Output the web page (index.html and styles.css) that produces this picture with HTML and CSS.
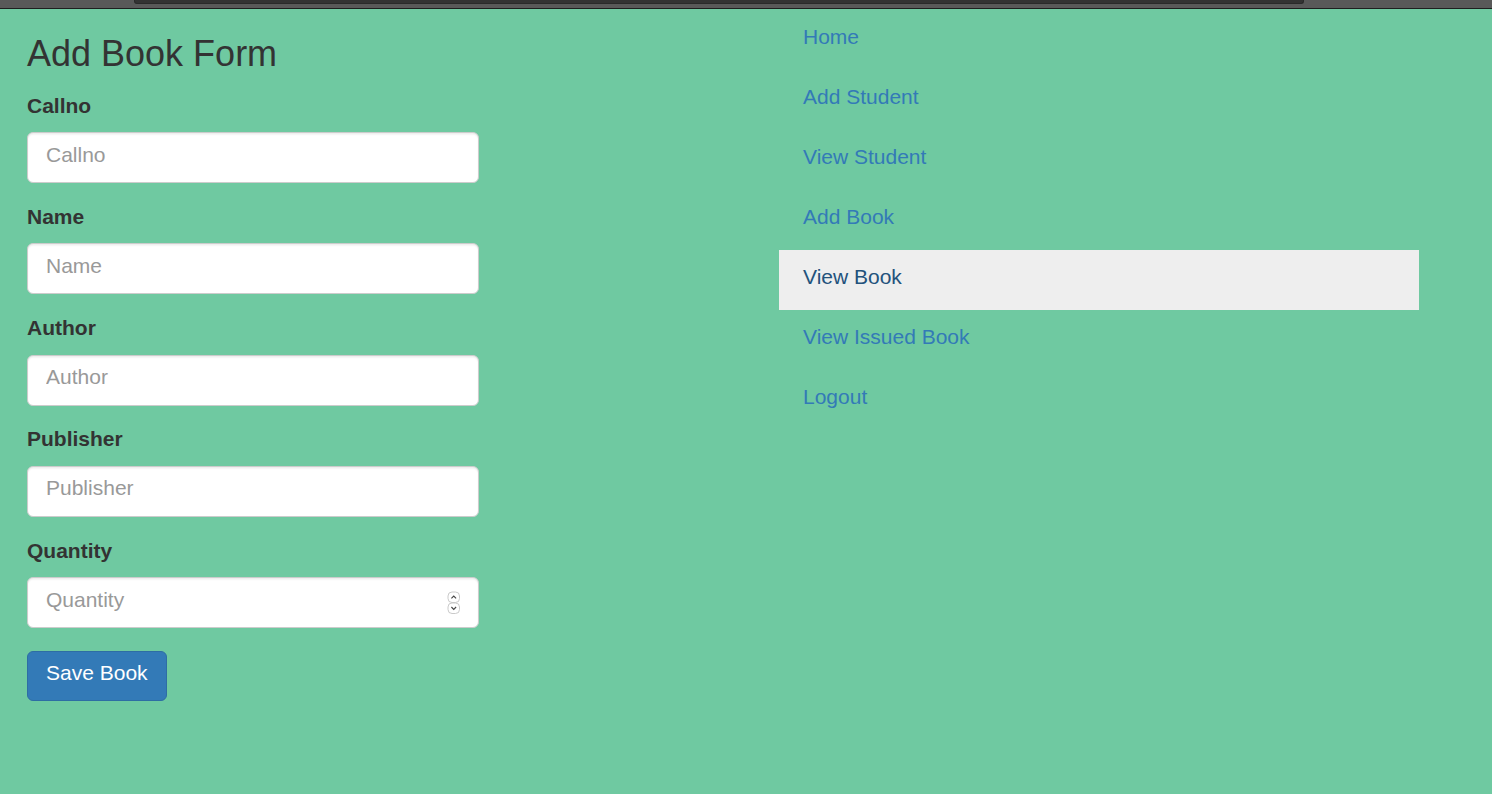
FILE: index.html
```html
<!DOCTYPE html>
<html>
<head>
<meta charset="utf-8">
<title>Add Book Form</title>
<link rel="stylesheet" href="styles.css">
</head>
<body>
<div class="chrome"><div class="chrome-tab"></div></div>
<div class="page">
  <div class="form-col">
    <h3 class="title">Add Book Form</h3>
    <form class="book-form">
      <div class="form-group">
        <label>Callno</label>
        <input class="form-control" type="text" placeholder="Callno">
      </div>
      <div class="form-group">
        <label>Name</label>
        <input class="form-control" type="text" placeholder="Name">
      </div>
      <div class="form-group">
        <label>Author</label>
        <input class="form-control" type="text" placeholder="Author">
      </div>
      <div class="form-group">
        <label>Publisher</label>
        <input class="form-control" type="text" placeholder="Publisher">
      </div>
      <div class="form-group">
        <label>Quantity</label>
        <div class="number-wrap">
          <input class="form-control" type="text" placeholder="Quantity">
          <svg class="spinner" width="14" height="24" viewBox="0 0 14 24">
            <rect x="1" y="1" width="11.5" height="10.5" rx="4" fill="#fff" stroke="#c4c4c4" stroke-width="0.9"/>
            <rect x="1" y="12" width="11.5" height="10.5" rx="4" fill="#fff" stroke="#c4c4c4" stroke-width="0.9"/>
            <path d="M4.4 7.4 L6.75 5 L9.1 7.4" fill="none" stroke="#444" stroke-width="1.1"/>
            <path d="M4.4 16 L6.75 18.4 L9.1 16" fill="none" stroke="#444" stroke-width="1.1"/>
          </svg>
        </div>
      </div>
      <button type="button" class="btn-primary">Save Book</button>
    </form>
  </div>
  <ul class="nav">
    <li><a href="#">Home</a></li>
    <li><a href="#">Add Student</a></li>
    <li><a href="#">View Student</a></li>
    <li><a href="#">Add Book</a></li>
    <li class="active"><a href="#">View Book</a></li>
    <li><a href="#">View Issued Book</a></li>
    <li><a href="#">Logout</a></li>
  </ul>
</div>
</body>
</html>
```
FILE: styles.css
```css
html, body {
  margin: 0;
  padding: 0;
}
body {
  background: #6fc9a1;
  font-family: "Liberation Sans", Arial, sans-serif;
  font-size: 21px;
  line-height: 30px;
  color: #333;
  height: 794px;
  overflow: hidden;
  position: relative;
}
.chrome {
  position: absolute;
  left: 0;
  top: 0;
  width: 100%;
  height: 8px;
  background: #595959;
  border-bottom: 1px solid #1f1f1f;
  z-index: 5;
}
.chrome-tab {
  margin-left: 134px;
  width: 1168px;
  height: 3px;
  background: #333;
  border-radius: 0 0 3px 3px;
  border: 1px solid #2a2a2a;
  border-top: none;
}
.page {
  display: flex;
  align-items: flex-start;
}
.form-col {
  width: 452px;
  margin-left: 27px;
}
.title {
  font-size: 36px;
  font-weight: 400;
  line-height: 39.6px;
  margin: 34px 0 17px;
}
.form-group {
  margin-bottom: 18.75px;
}
.form-group label {
  display: block;
  font-weight: 700;
  margin-bottom: 11.5px;
}
.form-control {
  display: block;
  box-sizing: border-box;
  width: 100%;
  height: 51px;
  padding: 6px 18px 12px;
  font-family: inherit;
  font-size: 21px;
  line-height: 30px;
  color: #555;
  background: #fff;
  border: 1px solid #ccc;
  border-radius: 6px;
  box-shadow: inset 0 1.5px 1.5px rgba(0,0,0,0.075);
  outline: none;
}
.form-control::placeholder {
  color: #999;
}
.number-wrap {
  position: relative;
}
.spinner {
  position: absolute;
  right: 18px;
  top: 14px;
}
.btn-primary {
  display: block;
  box-sizing: border-box;
  height: 50px;
  margin-top: 23px;
  padding: 6px 18px 12px;
  font-family: inherit;
  font-size: 21px;
  line-height: 30px;
  color: #fff;
  background: #337ab7;
  border: 1px solid #2e6da4;
  border-radius: 6px;
}
.nav {
  list-style: none;
  margin: 10px 0 0 300px;
  padding: 0;
  width: 640px;
}
.nav li a {
  display: block;
  padding: 12px 24px 18px;
  color: #337ab7;
  text-decoration: none;
}
.nav li.active a {
  background: #eee;
  color: #23527c;
}
```
